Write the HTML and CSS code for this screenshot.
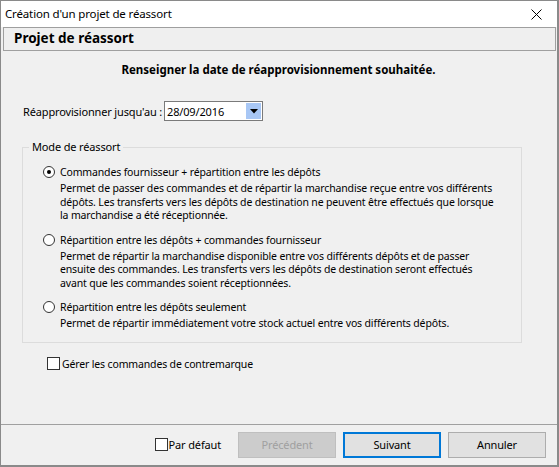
FILE: index.html
```html
<!DOCTYPE html>
<html lang="fr">
<head>
<meta charset="utf-8">
<title>Création d'un projet de réassort</title>
<link rel="stylesheet" href="styles.css">
</head>
<body>
<div class="window">
  <div class="titlebar">
    <span class="title">Création d'un projet de réassort</span>
    <svg class="close" width="11" height="11" viewBox="0 0 11 11"><path d="M0.5 0.5 L10.5 10.5 M10.5 0.5 L0.5 10.5" stroke="#000" stroke-width="1" fill="none"/></svg>
  </div>
  <div class="header">Projet de réassort</div>
  <div class="content">
    <div class="instruction">Renseigner la date de réapprovisionnement souhaitée.</div>
    <div class="date-row">
      <span class="date-label">Réapprovisionner jusqu'au :</span>
      <div class="date-field">
        <span class="date-value">28/09/2016</span>
        <span class="date-btn"><svg width="8" height="5" viewBox="0 0 8 5"><path d="M0 0 H8 L4 4.5 Z" fill="#000"/></svg></span>
      </div>
    </div>
    <fieldset class="group">
      <legend>Mode de réassort</legend>
      <div class="option">
        <div class="radio-row"><span class="radio checked"></span><span>Commandes fournisseur + répartition entre les dépôts</span></div>
        <div class="desc">Permet de passer des commandes et de répartir la marchandise reçue entre vos différents<br>dépôts. Les transferts vers les dépôts de destination ne peuvent être effectués que lorsque<br>la marchandise a été réceptionnée.</div>
      </div>
      <div class="option">
        <div class="radio-row"><span class="radio"></span><span>Répartition entre les dépôts + commandes fournisseur</span></div>
        <div class="desc">Permet de répartir la marchandise disponible entre vos différents dépôts et de passer<br>ensuite des commandes. Les transferts vers les dépôts de destination seront effectués<br>avant que les commandes soient réceptionnées.</div>
      </div>
      <div class="option last">
        <div class="radio-row"><span class="radio"></span><span>Répartition entre les dépôts seulement</span></div>
        <div class="desc">Permet de répartir immédiatement votre stock actuel entre vos différents dépôts.</div>
      </div>
    </fieldset>
    <div class="check-row contremarque"><span class="checkbox"></span><span>Gérer les commandes de contremarque</span></div>
  </div>
  <div class="footer">
    <div class="check-row default"><span class="checkbox"></span><span>Par défaut</span></div>
    <button class="btn disabled">Précédent</button>
    <button class="btn primary">Suivant</button>
    <button class="btn">Annuler</button>
  </div>
</div>
</body>
</html>
```
FILE: styles.css
```css
* { box-sizing: border-box; }
html, body { margin: 0; padding: 0; background: #f0f0f0; }
body {
  font-family: "Noto Sans", "DejaVu Sans", sans-serif;
  font-size: 10.5px;
  letter-spacing: -0.15px;
  color: #000;
}
.window {
  width: 559px;
  height: 467px;
  border-top: 1px solid #8a8a8a;
  border-left: 1px solid #8a8a8a;
  border-right: 2px solid #8a8a8a;
  border-bottom: 2px solid #8a8a8a;
  display: flex;
  flex-direction: column;
  background: #f0f0f0;
  white-space: nowrap;
}
.titlebar {
  height: 26px;
  background: #fff;
  display: flex;
  align-items: center;
  justify-content: space-between;
  padding: 0 15px 0 4px;
  line-height: 16px;
  font-size: 11.5px;
}
.close { display: block; }
.header {
  height: 24px;
  margin: 0 1px 0 2px;
  border: 1px solid #9f9f9f;
  background: #efefef;
  font-weight: bold;
  font-size: 13.5px;
  letter-spacing: 0;
  line-height: 21px;
  padding-left: 10px;
}
.content {
  flex: 1;
  padding: 11px 35px 0 21px;
}
.instruction {
  text-align: center;
  font-weight: bold;
  font-size: 11.5px;
  letter-spacing: 0;
  line-height: 16px;
  padding-left: 13px;
}
.date-row {
  margin-top: 23px;
  display: flex;
  align-items: center;
  height: 20px;
}
.date-label { margin-left: 1px; width: 141px; font-size: 11px; }
.date-field {
  width: 99px;
  height: 20px;
  border: 1px solid #7a7a7a;
  background: #fff;
  display: flex;
  align-items: center;
  justify-content: space-between;
  padding: 0 1px 0 2px;
  font-size: 11px;
}
.date-btn {
  width: 15px;
  height: 16px;
  background: #a8c7f5;
  display: flex;
  align-items: center;
  justify-content: center;
}
.date-btn svg { display: block; }
.group {
  margin: 18px 0 0 0;
  border: 1px solid #dcdcdc;
  padding: 9px 0 11px 20px;
}
.group legend {
  padding: 0 3px;
  margin-left: -14px;
  line-height: 16px;
  font-size: 11px;
}
.option { margin-bottom: 9px; }
.option.last { margin-bottom: 0; }
.radio-row {
  display: flex;
  align-items: center;
  height: 16px;
  gap: 5px;
}
.radio {
  width: 12px;
  height: 12px;
  border: 1px solid #333;
  border-radius: 50%;
  background: #fff;
  display: flex;
  align-items: center;
  justify-content: center;
}
.radio.checked::after {
  content: "";
  width: 4px;
  height: 4px;
  border-radius: 50%;
  background: #000;
}
.desc {
  margin-top: 2px;
  margin-left: 17px;
  line-height: 13.5px;
}
.check-row {
  display: flex;
  align-items: center;
  height: 16px;
  gap: 3px;
}
.checkbox {
  width: 13px;
  height: 13px;
  border: 1px solid #333;
  background: #fff;
}
.contremarque { margin: 13px 0 0 25px; gap: 2px; }
.footer {
  height: 41px;
  border-top: 1px solid #a0a0a0;
  display: flex;
  align-items: center;
  justify-content: flex-end;
  padding: 0 11px 1px 0;
}
.default { margin-right: 17px; gap: 1px; font-size: 11px; }
.btn {
  font-family: inherit;
  font-size: 11px;
  letter-spacing: -0.15px;
  width: 98px;
  height: 26px;
  margin-left: 7px;
  background: #e1e1e1;
  border: 1px solid #adadad;
  color: #000;
  padding: 0;
}
.btn.primary { border: 2px solid #0078d7; }
.btn.disabled {
  background: #cccccc;
  border-color: #bfbfbf;
  color: #a0a0a0;
  margin-left: 0;
}
```
